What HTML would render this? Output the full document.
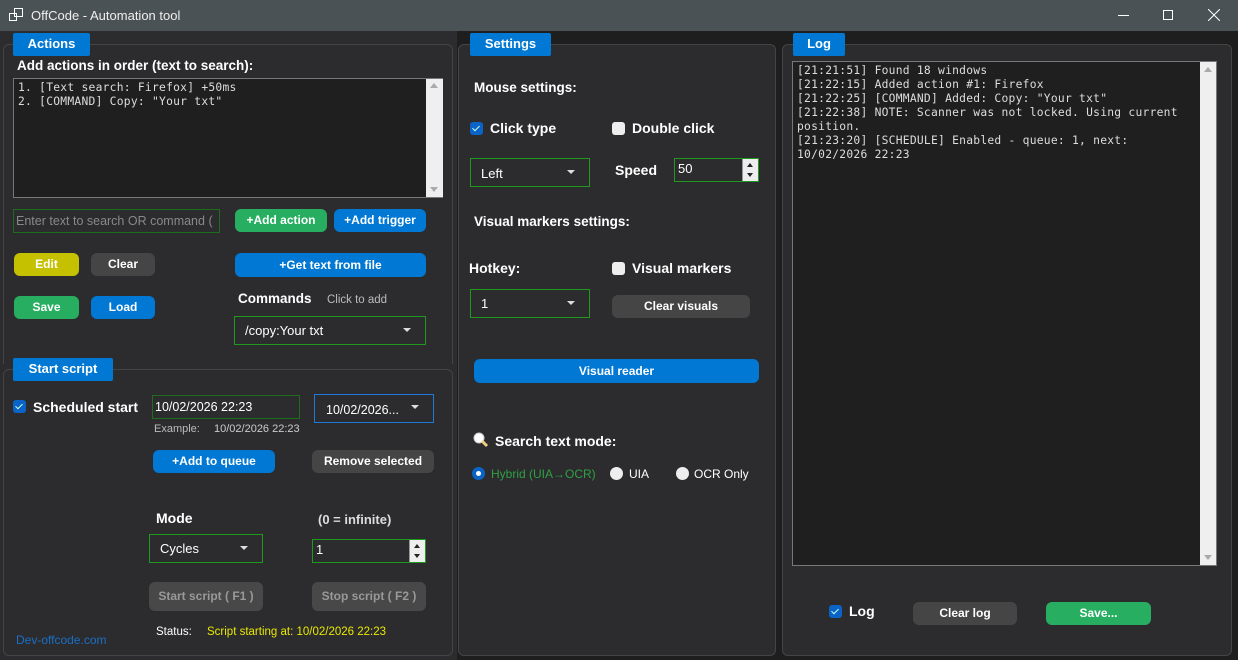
<!DOCTYPE html>
<html><head><meta charset="utf-8"><style>
*{box-sizing:border-box;margin:0;padding:0}
body{width:1238px;height:660px;background:#1e1e1e;font-family:"Liberation Sans",sans-serif;color:#fff;position:relative;overflow:hidden;font-size:12px}
.a{position:absolute;white-space:nowrap}
.title{left:0;top:0;width:1238px;height:31px;background:#4b5256}
.pan{position:absolute;background:#2c2c2e;border:1px solid #444;border-radius:6px}
.tab{position:absolute;background:#0078d4;color:#fff;font-weight:bold;font-size:13px;text-align:center;line-height:22px;height:23px;border-radius:2px}
.b{font-weight:bold;font-size:14px}
.btn{position:absolute;border-radius:6px;text-align:center;font-weight:bold;font-size:12px;color:#fff;line-height:22px;height:23px}
.g{background:#27ae60}.bl{background:#0078d4}.gr{background:#454545}
.dd{position:absolute;border:1px solid #1f9a1f;background:#2c2c2e;font-size:13px;padding-left:10px;line-height:26px}
.dd:after{content:"";position:absolute;right:14px;top:11px;border:4px solid transparent;border-top:4px solid #ddd}
.cb{position:absolute;width:13px;height:13px;border-radius:3px;background:#0a64c8}
.cb:after{content:"";position:absolute;left:4px;top:2px;width:3px;height:6px;border:solid #cfe;border-width:0 1px 1px 0;transform:rotate(45deg)}
.cbo{position:absolute;width:13px;height:13px;border-radius:3px;background:#eee}
.mono{font-family:"DejaVu Sans Mono","Liberation Mono",monospace;font-size:11.3px;color:#ddd;line-height:14px;letter-spacing:0.25px}
.sb{position:absolute;background:#efefef}
.spin{position:absolute;border:1px solid #1f9a1f;background:#2c2c2e;font-size:13px;padding-left:3px;line-height:20px}
.spin i{position:absolute;right:0;top:0;width:16px;height:100%;background:#eee;border-left:1px solid #999}
.spin i:before{content:"";position:absolute;left:4px;top:4px;border:3.5px solid transparent;border-bottom:4px solid #222;border-top:0}
.spin i:after{content:"";position:absolute;left:4px;bottom:4px;border:3.5px solid transparent;border-top:4px solid #222;border-bottom:0}
.rad{position:absolute;width:13px;height:13px;border-radius:50%;background:#eee}
</style></head><body>
<div class="a title"></div>
<svg class="a" style="left:9px;top:8px" width="15" height="14"><rect x="0.5" y="5.5" width="7" height="7" fill="none" stroke="#fff"/><rect x="5.5" y="0.5" width="8" height="8" fill="none" stroke="#fff"/></svg>
<div class="a" style="left:31px;top:8px;font-size:13px;color:#eee">OffCode - Automation tool</div>
<div class="a" style="left:1118px;top:15px;width:11px;height:1px;background:#fff"></div>
<div class="a" style="left:1163px;top:10px;width:10px;height:10px;border:1px solid #fff"></div>
<svg class="a" style="left:1208px;top:9px" width="12" height="12"><path d="M0 0L12 12M12 0L0 12" stroke="#fff"/></svg>

<div class="a" style="left:0;top:31px;width:457px;height:629px;background:#2c2c2e"></div>
<div class="pan" style="left:3px;top:44px;width:450px;height:320px;border-bottom:none;border-radius:6px 6px 0 0"></div>
<div class="pan" style="left:3px;top:369px;width:450px;height:287px"></div>
<div class="pan" style="left:458px;top:44px;width:318px;height:612px"></div>
<div class="pan" style="left:782px;top:44px;width:450px;height:612px"></div>

<div class="tab" style="left:13px;top:33px;width:77px">Actions</div>
<div class="tab" style="left:470px;top:33px;width:81px">Settings</div>
<div class="tab" style="left:793px;top:33px;width:52px">Log</div>
<div class="tab" style="left:13px;top:358px;width:100px">Start script</div>

<div class="a b" style="left:17px;top:58px;font-size:13.5px">Add actions in order (text to search):</div>
<div class="a" style="left:13px;top:78px;width:430px;height:120px;background:#1f1f1f;border:1px solid #777"></div>
<div class="sb" style="left:426px;top:79px;width:17px;height:118px"></div>
<div class="a" style="left:430px;top:83px;border:4px solid transparent;border-bottom:5px solid #aaa;border-top:0"></div>
<div class="a" style="left:430px;top:187px;border:4px solid transparent;border-top:5px solid #aaa;border-bottom:0"></div>
<div class="a mono" style="left:18px;top:81px">1. [Text search: Firefox] +50ms<br>2. [COMMAND] Copy: "Your txt"</div>

<div class="a" style="left:13px;top:209px;width:207px;height:24px;border:1px solid #1d6d1d;background:#2c2c2e;color:#888;font-size:12.5px;padding-left:2px;line-height:22px;overflow:hidden">Enter text to search OR command (</div>
<div class="btn g" style="left:235px;top:209px;width:92px">+Add action</div>
<div class="btn bl" style="left:334px;top:209px;width:92px">+Add trigger</div>
<div class="btn" style="left:14px;top:253px;width:65px;background:#c5c000">Edit</div>
<div class="btn gr" style="left:91px;top:253px;width:64px">Clear</div>
<div class="btn bl" style="left:235px;top:253px;width:191px;height:24px;line-height:24px">+Get text from file</div>
<div class="btn g" style="left:14px;top:296px;width:65px">Save</div>
<div class="btn bl" style="left:91px;top:296px;width:64px">Load</div>
<div class="a b" style="left:238px;top:291px;font-size:13.5px">Commands</div>
<div class="a" style="left:327px;top:294px;color:#bbb;font-size:11.5px">Click to add</div>
<div class="dd" style="left:234px;top:316px;width:192px;height:29px;line-height:28px">/copy:Your txt</div>

<div class="cb" style="left:13px;top:400px"></div>
<div class="a b" style="left:33px;top:399px">Scheduled start</div>
<div class="a" style="left:152px;top:395px;width:148px;height:24px;border:1px solid #1d6d1d;font-size:12.5px;padding-left:2px;line-height:22px">10/02/2026 22:23</div>
<div class="a" style="left:314px;top:394px;width:120px;height:29px;border:1px solid #1e7ad6;font-size:12.5px;padding-left:11px;line-height:30px">10/02/2026...</div>
<div class="a" style="left:411px;top:405px;border:4px solid transparent;border-top:4px solid #ddd"></div>
<div class="a" style="left:154px;top:423px;color:#bbb;font-size:11px">Example:</div>
<div class="a" style="left:214px;top:423px;color:#ccc;font-size:11px">10/02/2026 22:23</div>
<div class="btn bl" style="left:153px;top:450px;width:122px">+Add to queue</div>
<div class="btn gr" style="left:312px;top:450px;width:122px">Remove selected</div>
<div class="a b" style="left:156px;top:510px">Mode</div>
<div class="a b" style="left:318px;top:512px;font-size:13px;color:#ddd">(0 = infinite)</div>
<div class="dd" style="left:149px;top:534px;width:114px;height:29px;line-height:28px">Cycles</div>
<div class="spin" style="left:312px;top:539px;width:114px;height:24px">1<i></i></div>
<div class="btn" style="left:149px;top:582px;width:114px;height:29px;line-height:29px;background:#484848;color:#999">Start script ( F1 )</div>
<div class="btn" style="left:312px;top:582px;width:114px;height:29px;line-height:29px;background:#484848;color:#999">Stop script ( F2 )</div>
<div class="a" style="left:156px;top:626px;font-size:11.5px">Status:</div>
<div class="a" style="left:207px;top:626px;font-size:11.5px;color:#e8e800">Script starting at: 10/02/2026 22:23</div>
<div class="a" style="left:16px;top:633px;font-size:12px;color:#1a6fc4">Dev-offcode.com</div>

<div class="a b" style="left:474px;top:80px;font-size:13.5px">Mouse settings:</div>
<div class="cb" style="left:470px;top:122px"></div>
<div class="a b" style="left:490px;top:120px">Click type</div>
<div class="cbo" style="left:612px;top:122px"></div>
<div class="a b" style="left:632px;top:120px">Double click</div>
<div class="dd" style="left:470px;top:158px;width:120px;height:29px;line-height:30px">Left</div>
<div class="a b" style="left:615px;top:162px">Speed</div>
<div class="spin" style="left:674px;top:158px;width:85px;height:24px">50<i></i></div>
<div class="a b" style="left:474px;top:214px;font-size:13.5px">Visual markers settings:</div>
<div class="a b" style="left:469px;top:260px">Hotkey:</div>
<div class="cbo" style="left:612px;top:262px"></div>
<div class="a b" style="left:632px;top:260px">Visual markers</div>
<div class="dd" style="left:470px;top:289px;width:120px;height:29px;line-height:28px">1</div>
<div class="btn gr" style="left:612px;top:295px;width:138px">Clear visuals</div>
<div class="btn bl" style="left:474px;top:359px;width:285px;height:24px;line-height:24px">Visual reader</div>
<svg class="a" style="left:473px;top:432px" width="16" height="16"><circle cx="6" cy="6" r="5" fill="#fff" stroke="#ccc"/><path d="M9 9L14 14" stroke="#f0d080" stroke-width="3"/></svg>
<div class="a b" style="left:495px;top:433px">Search text mode:</div>
<div class="rad" style="left:472px;top:467px;background:#0a64c8"></div>
<div class="a" style="left:476px;top:471px;width:5px;height:5px;border-radius:50%;background:#fff"></div>
<div class="a" style="left:491px;top:467px;color:#2ea043;font-size:12px">Hybrid (UIA→OCR)</div>
<div class="rad" style="left:610px;top:467px"></div>
<div class="a" style="left:629px;top:467px;font-size:12px">UIA</div>
<div class="rad" style="left:676px;top:467px"></div>
<div class="a" style="left:694px;top:467px;font-size:12px">OCR Only</div>

<div class="a" style="left:792px;top:61px;width:425px;height:505px;background:#1f1f1f;border:1px solid #777"></div>
<div class="sb" style="left:1200px;top:62px;width:16px;height:503px"></div>
<div class="a" style="left:1204px;top:67px;border:4px solid transparent;border-bottom:5px solid #aaa;border-top:0"></div>
<div class="a" style="left:1204px;top:555px;border:4px solid transparent;border-top:5px solid #aaa;border-bottom:0"></div>
<div class="a mono" style="left:797px;top:64px;white-space:pre">[21:21:51] Found 18 windows
[21:22:15] Added action #1: Firefox
[21:22:25] [COMMAND] Added: Copy: "Your txt"
[21:22:38] NOTE: Scanner was not locked. Using current
position.
[21:23:20] [SCHEDULE] Enabled - queue: 1, next:
10/02/2026 22:23</div>
<div class="cb" style="left:829px;top:605px"></div>
<div class="a b" style="left:849px;top:603px">Log</div>
<div class="btn gr" style="left:913px;top:602px;width:104px">Clear log</div>
<div class="btn g" style="left:1046px;top:602px;width:105px">Save...</div>
</body></html>
